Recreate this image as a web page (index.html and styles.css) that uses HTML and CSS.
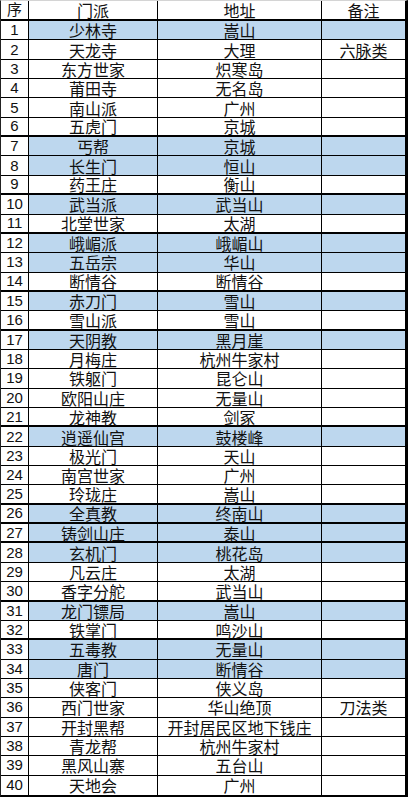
FILE: index.html
```html
<!DOCTYPE html>
<html lang="zh-CN">
<head>
<meta charset="utf-8">
<title>门派</title>
<link rel="stylesheet" href="styles.css">
</head>
<body>
<div class="sheet">
  <div class="row head"><div class="c n">序</div><div class="c">门派</div><div class="c">地址</div><div class="c">备注</div></div>
  <div class="row blue"><div class="c n">1</div><div class="c">少林寺</div><div class="c">嵩山</div><div class="c"></div></div>
  <div class="row"><div class="c n">2</div><div class="c">天龙寺</div><div class="c">大理</div><div class="c">六脉类</div></div>
  <div class="row"><div class="c n">3</div><div class="c">东方世家</div><div class="c">炽寒岛</div><div class="c"></div></div>
  <div class="row"><div class="c n">4</div><div class="c">莆田寺</div><div class="c">无名岛</div><div class="c"></div></div>
  <div class="row"><div class="c n">5</div><div class="c">南山派</div><div class="c">广州</div><div class="c"></div></div>
  <div class="row thick"><div class="c n">6</div><div class="c">五虎门</div><div class="c">京城</div><div class="c"></div></div>
  <div class="row blue"><div class="c n">7</div><div class="c">丐帮</div><div class="c">京城</div><div class="c"></div></div>
  <div class="row blue"><div class="c n">8</div><div class="c">长生门</div><div class="c">恒山</div><div class="c"></div></div>
  <div class="row thick"><div class="c n">9</div><div class="c">药王庄</div><div class="c">衡山</div><div class="c"></div></div>
  <div class="row blue"><div class="c n">10</div><div class="c">武当派</div><div class="c">武当山</div><div class="c"></div></div>
  <div class="row thick"><div class="c n">11</div><div class="c">北堂世家</div><div class="c">太湖</div><div class="c"></div></div>
  <div class="row blue"><div class="c n">12</div><div class="c">峨嵋派</div><div class="c">峨嵋山</div><div class="c"></div></div>
  <div class="row blue"><div class="c n">13</div><div class="c">五岳宗</div><div class="c">华山</div><div class="c"></div></div>
  <div class="row thick"><div class="c n">14</div><div class="c">断情谷</div><div class="c">断情谷</div><div class="c"></div></div>
  <div class="row blue"><div class="c n">15</div><div class="c">赤刀门</div><div class="c">雪山</div><div class="c"></div></div>
  <div class="row thick"><div class="c n">16</div><div class="c">雪山派</div><div class="c">雪山</div><div class="c"></div></div>
  <div class="row blue"><div class="c n">17</div><div class="c">天阴教</div><div class="c">黑月崖</div><div class="c"></div></div>
  <div class="row"><div class="c n">18</div><div class="c">月梅庄</div><div class="c">杭州牛家村</div><div class="c"></div></div>
  <div class="row"><div class="c n">19</div><div class="c">铁躯门</div><div class="c">昆仑山</div><div class="c"></div></div>
  <div class="row"><div class="c n">20</div><div class="c">欧阳山庄</div><div class="c">无量山</div><div class="c"></div></div>
  <div class="row thick"><div class="c n">21</div><div class="c">龙神教</div><div class="c">剑冢</div><div class="c"></div></div>
  <div class="row blue"><div class="c n">22</div><div class="c">逍遥仙宫</div><div class="c">鼓楼峰</div><div class="c"></div></div>
  <div class="row"><div class="c n">23</div><div class="c">极光门</div><div class="c">天山</div><div class="c"></div></div>
  <div class="row"><div class="c n">24</div><div class="c">南宫世家</div><div class="c">广州</div><div class="c"></div></div>
  <div class="row thick"><div class="c n">25</div><div class="c">玲珑庄</div><div class="c">嵩山</div><div class="c"></div></div>
  <div class="row blue thick"><div class="c n">26</div><div class="c">全真教</div><div class="c">终南山</div><div class="c"></div></div>
  <div class="row blue thick"><div class="c n">27</div><div class="c">铸剑山庄</div><div class="c">泰山</div><div class="c"></div></div>
  <div class="row blue"><div class="c n">28</div><div class="c">玄机门</div><div class="c">桃花岛</div><div class="c"></div></div>
  <div class="row"><div class="c n">29</div><div class="c">凡云庄</div><div class="c">太湖</div><div class="c"></div></div>
  <div class="row thick"><div class="c n">30</div><div class="c">香字分舵</div><div class="c">武当山</div><div class="c"></div></div>
  <div class="row blue"><div class="c n">31</div><div class="c">龙门镖局</div><div class="c">嵩山</div><div class="c"></div></div>
  <div class="row thick"><div class="c n">32</div><div class="c">铁掌门</div><div class="c">鸣沙山</div><div class="c"></div></div>
  <div class="row blue"><div class="c n">33</div><div class="c">五毒教</div><div class="c">无量山</div><div class="c"></div></div>
  <div class="row blue"><div class="c n">34</div><div class="c">唐门</div><div class="c">断情谷</div><div class="c"></div></div>
  <div class="row"><div class="c n">35</div><div class="c">侠客门</div><div class="c">侠义岛</div><div class="c"></div></div>
  <div class="row"><div class="c n">36</div><div class="c">西门世家</div><div class="c">华山绝顶</div><div class="c">刀法类</div></div>
  <div class="row"><div class="c n">37</div><div class="c">开封黑帮</div><div class="c">开封居民区地下钱庄</div><div class="c"></div></div>
  <div class="row"><div class="c n">38</div><div class="c">青龙帮</div><div class="c">杭州牛家村</div><div class="c"></div></div>
  <div class="row"><div class="c n">39</div><div class="c">黑风山寨</div><div class="c">五台山</div><div class="c"></div></div>
  <div class="row last"><div class="c n">40</div><div class="c">天地会</div><div class="c">广州</div><div class="c"></div></div>
</div>
</body>
</html>
```

FILE: styles.css
```css
html, body {
  margin: 0;
  padding: 0;
  background: #ffffff;
}

.sheet {
  box-sizing: border-box;
  width: 408px;
  height: 797px;
  border-top: 1px solid #d4d4d4;
  border-left: 1px solid #222222;
  border-right: 3px solid #000000;
  border-bottom: 2px solid #000000;
  display: grid;
  grid-template-rows: 20px repeat(40, 1fr);
  font-family: "Noto Sans CJK SC", "Liberation Sans", sans-serif;
  color: #111111;
}

.row {
  box-sizing: border-box;
  display: grid;
  grid-template-columns: 28px 129px 164px 1fr;
  border-bottom: 1px solid #000000;
  min-height: 0;
}

.row.head {
  border-bottom-width: 2px;
}

.row.thick {
  border-bottom-width: 2px;
}

.row.last {
  border-bottom: none;
}

.c {
  box-sizing: border-box;
  display: flex;
  align-items: center;
  justify-content: center;
  border-right: 1px solid #000000;
  font-size: 16px;
  line-height: 16px;
  white-space: nowrap;
  min-height: 0;
}

.c:last-child {
  border-right: none;
}

.c.n {
  font-family: "Liberation Sans", "Noto Sans CJK SC", sans-serif;
  font-size: 15px;
}

.blue .c:not(.n) {
  background: #bdd7ee;
}
```
